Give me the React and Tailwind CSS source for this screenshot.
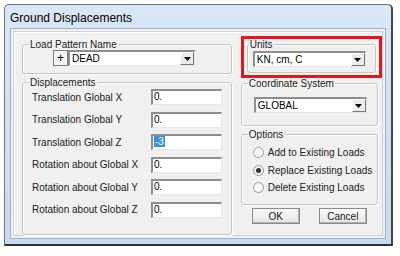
import React from "react";

const font = { fontFamily: '"Liberation Sans", Arial, sans-serif' };

function Group({ title, className, legendClass = "ml-[6px]", children }) {
  return (
    <fieldset
      className={
        "border border-[#c4c4c4] rounded-[3px] shadow-[inset_1px_1px_0_#ffffff,1px_1px_0_#ffffff] " +
        className
      }
    >
      <legend className={"px-[1px] text-[10px] leading-[11px] text-[#202020] whitespace-nowrap " + legendClass}>
        {title}
      </legend>
      {children}
    </fieldset>
  );
}

function Combo({ value, className }) {
  return (
    <div
      className={
        "flex h-[16px] bg-white border-t-2 border-l-2 border-t-[#8e8e8e] border-l-[#8e8e8e] border-b border-r border-b-[#e6e6e6] border-r-[#e6e6e6] " +
        className
      }
    >
      <div className="flex-1 pl-[2px] text-[10px] leading-[13px] text-black whitespace-nowrap">{value}</div>
      <div className="w-[14px] h-[13px] bg-[#ececec] border border-t-white border-l-white border-b-[#777] border-r-[#777] flex items-center justify-center">
        <svg width="7" height="4" viewBox="0 0 7 4">
          <path d="M0 0h7L3.5 4z" fill="#000" />
        </svg>
      </div>
    </div>
  );
}

function Field({ label, value, selected }) {
  return (
    <div className="flex items-center h-[22.5px]">
      <div className="w-[119px] text-[10px] text-[#202020] whitespace-nowrap">{label}</div>
      <div className="w-[71px] h-[16px] bg-white border-t-2 border-l-2 border-t-[#8e8e8e] border-l-[#8e8e8e] border-b border-r border-b-[#e8e8e8] border-r-[#e8e8e8] pl-[1px] text-[10px] leading-[12px] text-black">
        {selected ? (
          <span className="bg-[#3a8ee6] text-white px-[1px]">{value}</span>
        ) : (
          value
        )}
      </div>
    </div>
  );
}

function Radio({ label, checked }) {
  return (
    <div className="flex items-center h-[17.5px] pl-[11px]">
      <div className="w-[11px] h-[11px] shrink-0 rounded-full border border-[#9a9a9a] bg-[#f6f6f6] flex items-center justify-center">
        {checked && <div className="w-[5px] h-[5px] rounded-full bg-[#333]" />}
      </div>
      <span className="ml-[4px] text-[10px] text-[#202020] whitespace-nowrap">{label}</span>
    </div>
  );
}

function Button({ children }) {
  return (
    <div className="w-[48px] h-[16px] border border-[#8a8a8a] bg-gradient-to-b from-[#fafafa] to-[#e6e6e6] shadow-[inset_-1px_-1px_0_#b0b0b0] flex items-center justify-center text-[10px] text-[#202020]">
      {children}
    </div>
  );
}

export default function App() {
  return (
    <div className="w-[400px] h-[256px] bg-white relative overflow-hidden" style={font}>
      <div className="absolute left-[4px] top-[4px] w-[389px] h-[242px] rounded-t-[5px] border border-[#6b7580] border-b-2 border-b-[#2e3338] border-r-2 border-r-[#3f464d] bg-gradient-to-b from-[#d9e7f6] to-[#c6dbef] flex flex-col">
        <div className="h-[24px] pl-[5px] pt-[4px] text-[12px] text-black">Ground Displacements</div>
        <div className="mx-[5px] mb-[5px] flex-1 border border-[#9fb2c6] bg-[#f0f0f0] p-[2px]">
          <div className="h-full border border-[#d0d0d0] shadow-[inset_1px_1px_0_#fff] flex pl-[8px] pt-[6px]">
            <div className="w-[211px] flex flex-col">
              <Group title="Load Pattern Name" className="h-[35px] mt-[1px]">
                <div className="flex pl-[30px]">
                  <div className="w-[15px] h-[16px] border border-[#7a7a7a] bg-[#f4f4f4] flex items-center justify-center text-[12px] leading-[12px] text-black">
                    +
                  </div>
                  <Combo value="DEAD" className="w-[127px]" />
                </div>
              </Group>
              <Group title="Displacements" className="h-[158px] mt-[3px]">
                <div className="-mt-[2px] pl-[9px]">
                  <Field label="Translation Global X" value="0." />
                  <Field label="Translation Global Y" value="0." />
                  <Field label="Translation Global Z" value="-3" selected />
                  <Field label="Rotation about Global X" value="0." />
                  <Field label="Rotation about Global Y" value="0." />
                  <Field label="Rotation about Global Z" value="0." />
                </div>
              </Group>
            </div>
            <div className="w-[142px] ml-[9px] flex flex-col">
              <div className="h-[42px] -mt-[2px] border-[3px] border-[#e8141c] px-[3px]">
                <Group title="Units" legendClass="ml-[1px]" className="h-[34px]">
                  <div className="pl-[5px] pt-[1px]">
                    <Combo value="KN, cm, C" className="w-[113px]" />
                  </div>
                </Group>
              </div>
              <Group title="Coordinate System" className="w-[137px] h-[48px] mt-[0px]">
                <div className="pt-[8px] pl-[12px]">
                  <Combo value="GLOBAL" className="w-[113px]" />
                </div>
              </Group>
              <Group title="Options" className="w-[137px] h-[76px] mt-[3px]">
                <div className="pt-[4px]">
                  <Radio label="Add to Existing Loads" />
                  <Radio label="Replace Existing Loads" checked />
                  <Radio label="Delete Existing Loads" />
                </div>
              </Group>
              <div className="flex w-[137px] pl-[11px] gap-[19px] mt-[3px]">
                <Button>OK</Button>
                <Button>Cancel</Button>
              </div>
            </div>
          </div>
        </div>
      </div>
    </div>
  );
}
